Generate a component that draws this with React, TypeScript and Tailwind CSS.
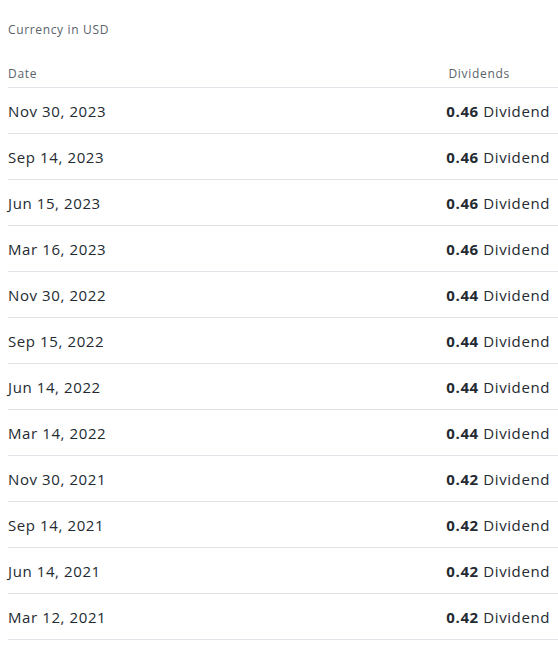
import React from 'react';

const rows = [
  ['Nov 30, 2023', '0.46'],
  ['Sep 14, 2023', '0.46'],
  ['Jun 15, 2023', '0.46'],
  ['Mar 16, 2023', '0.46'],
  ['Nov 30, 2022', '0.44'],
  ['Sep 15, 2022', '0.44'],
  ['Jun 14, 2022', '0.44'],
  ['Mar 14, 2022', '0.44'],
  ['Nov 30, 2021', '0.42'],
  ['Sep 14, 2021', '0.42'],
  ['Jun 14, 2021', '0.42'],
  ['Mar 12, 2021', '0.42'],
];

const App = () => {
  return (
    <div className="w-[558px] h-[648px] bg-white pl-2 font-['Open_Sans',sans-serif]">
      <p className="pt-[22px] text-xs leading-4 tracking-[0.65px] text-[#5b636a]">Currency in USD</p>
      <div className="mt-[22px] flex h-[28px] items-center justify-between border-b border-[#e0e4e9] pr-[48px] text-xs tracking-[0.7px] text-[#5b636a]">
        <span>Date</span>
        <span>Dividends</span>
      </div>
      {rows.map(([date, value]) => (
        <div
          key={date}
          className="flex h-[46px] items-center justify-between border-b border-[#e0e4e9] pr-2 pt-px text-[15px] tracking-[0.6px] text-[#232a31]"
        >
          <span>{date}</span>
          <span>
            <b className="font-bold">{value}</b> Dividend
          </span>
        </div>
      ))}
    </div>
  );
};

export default App;
